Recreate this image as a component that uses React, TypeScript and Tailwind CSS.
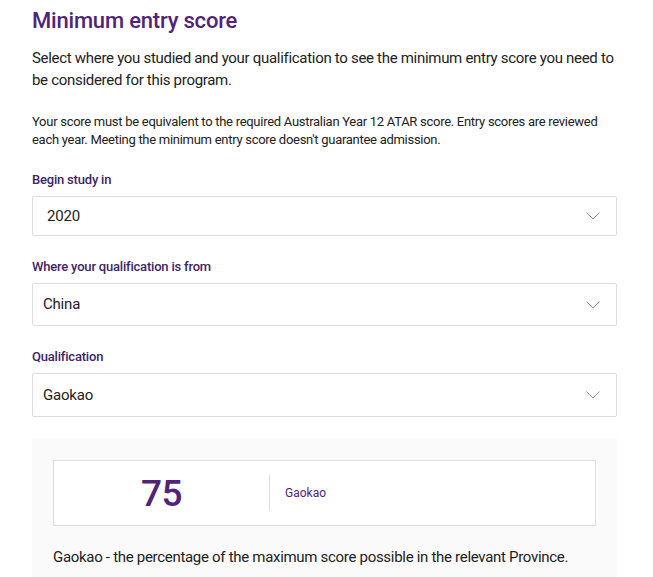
import React from 'react'

const Chevron: React.FC = () => (
  <svg width="14" height="8" viewBox="0 0 14 8" fill="none" className="shrink-0">
    <path d="M0.5 0.5 L7 7 L13.5 0.5" stroke="#9b83bd" strokeWidth="1" />
  </svg>
)

interface SelectFieldProps {
  label: string
  value: string
  boxClassName: string
}

const SelectField: React.FC<SelectFieldProps> = ({ label, value, boxClassName }) => {
  return (
    <div className="flex flex-col">
      <label className="text-[13px] leading-[18px] font-medium tracking-[-0.2px] text-[#3f2466]">{label}</label>
      <div
        className={`mt-[7px] flex items-center justify-between border border-[#dcdcdc] rounded-[2px] bg-white pr-[16px] ${boxClassName}`}
      >
        <span className="text-[15px] tracking-[-0.2px] text-[#222]">{value}</span>
        <Chevron />
      </div>
    </div>
  )
}

export default function App() {
  return (
    <div className="min-h-screen bg-white font-['Roboto',sans-serif]">
      <div className="ml-[32px] w-[585px] pt-[7px]">
        <h2 className="text-[22px] leading-[28px] font-medium tracking-[-0.2px] text-[#51247a]">Minimum entry score</h2>
        <p className="mt-[12px] text-[15px] leading-[22px] tracking-[-0.3px] text-[#222]">
          Select where you studied and your qualification to see the minimum entry score you need to
          be considered for this program.
        </p>
        <p className="mt-[22px] text-[13px] leading-[18px] tracking-[-0.28px] text-[#222]">
          Your score must be equivalent to the required Australian Year 12 ATAR score. Entry scores are reviewed
          each year. Meeting the minimum entry score doesn't guarantee admission.
        </p>

        <div className="mt-[22px] flex flex-col gap-[22px]">
          <SelectField label="Begin study in" value="2020" boxClassName="h-[40px] pl-[14px]" />
          <SelectField label="Where your qualification is from" value="China" boxClassName="h-[43px] pl-[10px]" />
          <SelectField label="Qualification" value="Gaokao" boxClassName="h-[44px] pl-[10px]" />
        </div>

        <div className="mt-[21px] bg-[#fafafa] px-[21px] pt-[22px] pb-[10px]">
          <div className="flex items-center h-[66px] border border-[#dedede] bg-white">
            <div className="w-[215px] text-center text-[37px] leading-none font-medium tracking-[-0.5px] text-[#51247a]">75</div>
            <div className="w-px h-[36px] bg-[#dedede]" />
            <div className="pl-[15px] text-[12px] text-[#51247a]">Gaokao</div>
          </div>
          <p className="mt-[20px] text-[15px] leading-[22px] tracking-[-0.3px] text-[#222]">
            Gaokao - the percentage of the maximum score possible in the relevant Province.
          </p>
        </div>
      </div>
    </div>
  )
}
